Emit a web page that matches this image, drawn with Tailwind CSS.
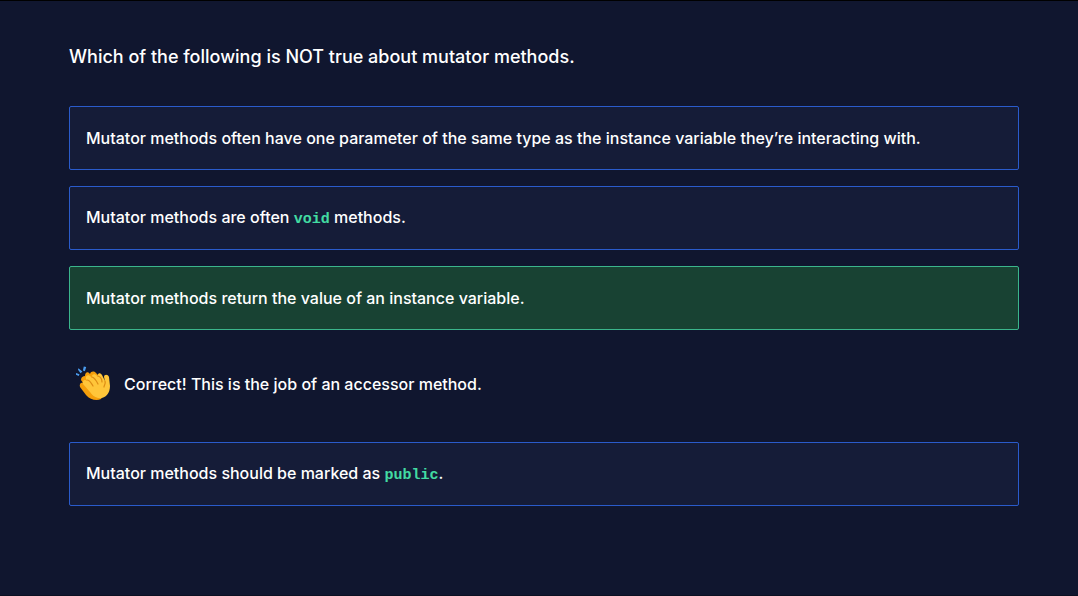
<!DOCTYPE html>
<html lang="en">
<head>
<meta charset="UTF-8">
<meta name="viewport" content="width=device-width, initial-scale=1">
<title>Mutator methods quiz</title>
<script src="https://cdn.jsdelivr.net/npm/@tailwindcss/browser@4"></script>
</head>
<body class="min-h-screen border-y border-t-black border-b-[#0b1022] bg-[#10162f] font-['Inter',sans-serif] text-white">
<main class="pt-10 pr-[59px] pb-16 pl-[69px]">
  <h1 class="text-lg leading-8 font-medium">Which of the following is NOT true about mutator methods.</h1>
  <div class="mt-[33px] flex flex-col gap-4 text-base leading-6 font-medium">
    <button type="button" class="min-h-16 rounded-xs border border-[#2a5bcb] bg-[#151c38] px-4 py-2 text-left">Mutator methods often have one parameter of the same type as the instance variable they’re interacting with.</button>
    <button type="button" class="min-h-16 rounded-xs border border-[#2a5bcb] bg-[#151c38] px-4 py-2 text-left">Mutator methods are often <code class="font-['Liberation_Mono',monospace] text-[15px] font-bold text-[#42dba2]">void</code> methods.</button>
    <button type="button" aria-pressed="true" class="min-h-16 rounded-xs border border-[#3bb58c] bg-[#184233] px-4 py-2 text-left">Mutator methods return the value of an instance variable.</button>
    <div role="status" class="flex h-20 items-center gap-3 pb-1 pl-[7px]">
      <svg class="size-9 shrink-0" viewBox="0 0 36 36" role="img" aria-label="Clapping hands">
        <path fill="#4a9df0" d="M0 7l3.500 1.200-.8 1.800-2.700-1.200zM2.400 2.200l4 3.200-1.800 1.800-2.600-3.500zM7.800 .5l2.400 .6-1.300 4.100-2-.6z"/>
        <path fill="#f59f0b" d="M9 10c0-4 3-5 5-2 1-3 4-3 6-1l13 13-8 13c-4 2-11 1-15-4L4 21c-1-3 1-5 3-4l-2-3c0-3 2-4 4-4z"/>
        <path fill="#ffc63a" d="M10 13c-1-4 3-5 5-2l1 1c-1-4 3-5 5-2l1 1c-1-4 2-5 4-2l3 6-1-4c0-3 4-3 5 0l1 9c0 8-5 13-12 12-4-1-6-3-8-6L7 18c-1-4 2-5 4-3l-1-2z"/>
        <path d="M11 14c3 0 4 3 6 6M16 11c3 1 5 5 6 7M22 10c3 1 4 4 4 6M29 15c1 3-1 4-1 6" fill="none" stroke="#dd8c14" stroke-width="1.2" stroke-linecap="round"/>
      </svg>
      <p>Correct! This is the job of an accessor method.</p>
    </div>
    <button type="button" class="min-h-16 rounded-xs border border-[#2a5bcb] bg-[#151c38] px-4 py-2 text-left">Mutator methods should be marked as <code class="font-['Liberation_Mono',monospace] text-[15px] font-bold text-[#42dba2]">public</code>.</button>
  </div>
</main>
</body>
</html>
